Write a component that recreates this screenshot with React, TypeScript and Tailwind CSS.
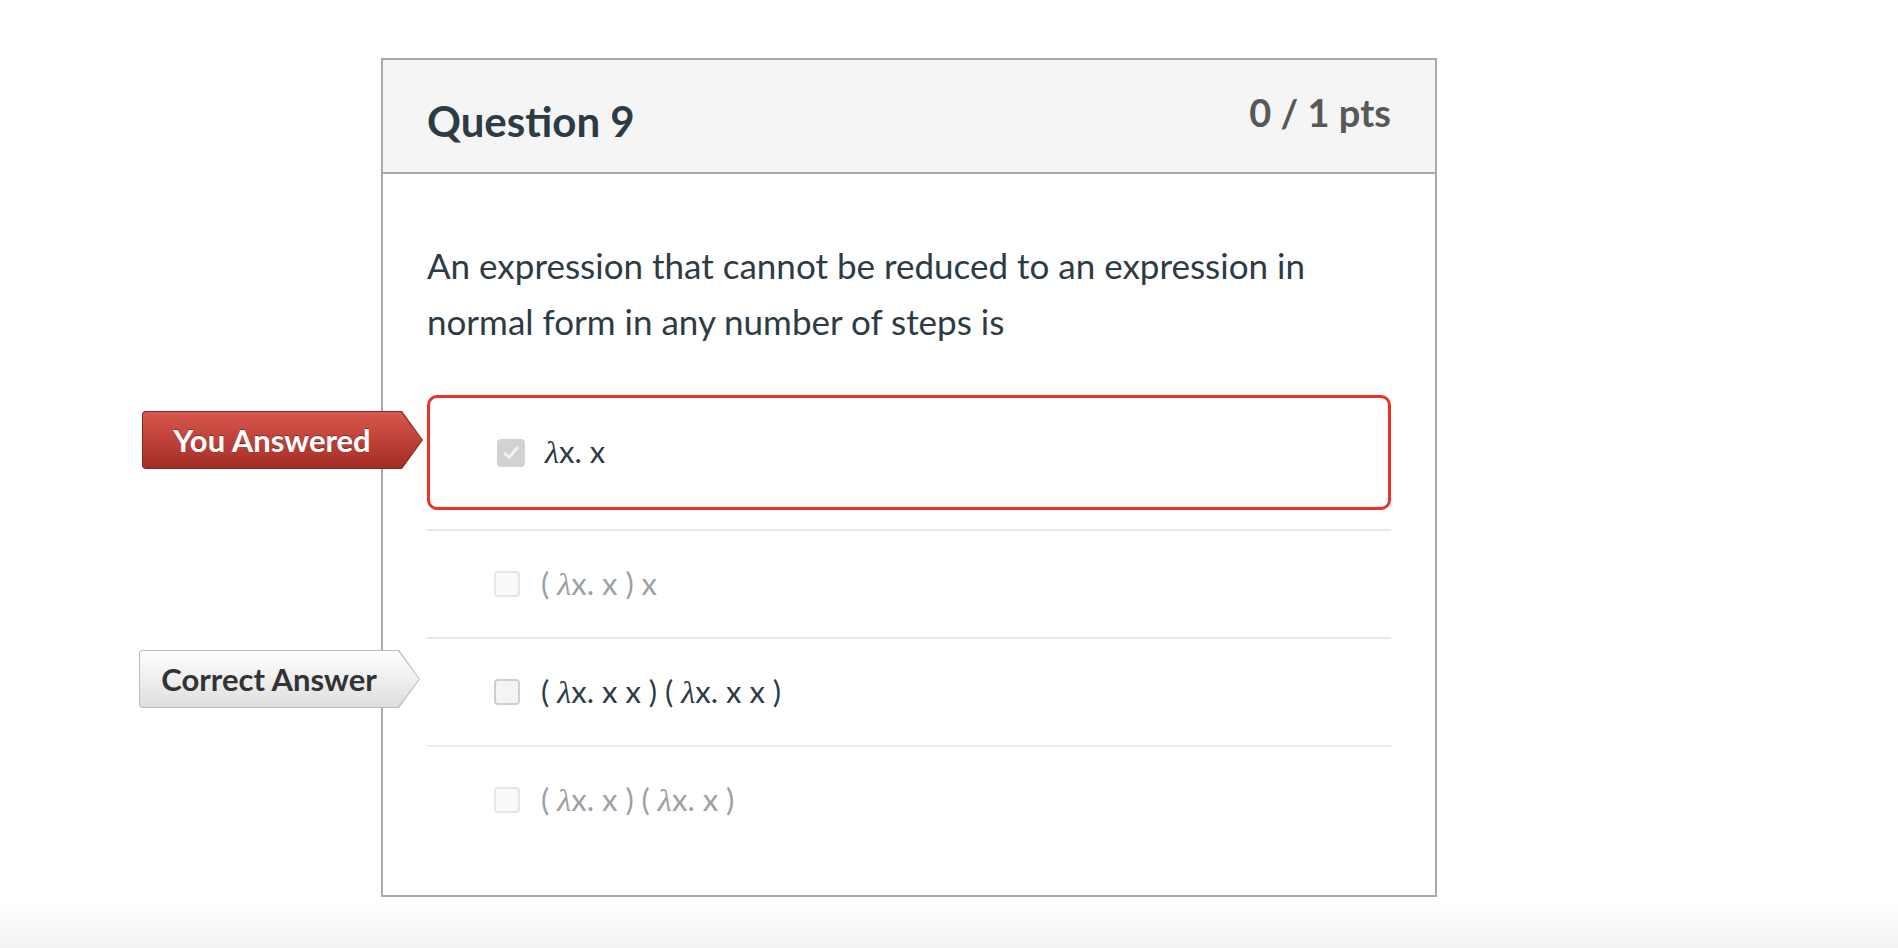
import React from "react";

const Lam = () => (
  <span className="italic font-['Liberation_Serif',serif] text-[1.05em]">λ</span>
);

function Label({ kind }: { kind: "you" | "correct" }) {
  const you = kind === "you";
  const shape =
    "[clip-path:polygon(0_0,calc(100%-21px)_0,100%_50%,calc(100%-21px)_100%,0_100%)]";
  return (
    <div
      className={`absolute h-[58px] right-[calc(100%+7px)] rounded-l-[4px] p-px ${shape} ${
        you ? "w-[281px] bg-[#8f251f] top-[13px]" : "w-[281px] bg-[#bcbcbc] top-[11px]"
      }`}
    >
      <div
        className={`h-full w-full rounded-l-[3px] flex items-center justify-center pr-[21px] ${shape} ${
          you
            ? "bg-gradient-to-b from-[#d9574e] to-[#a42c25]"
            : "bg-gradient-to-b from-[#ffffff] to-[#dedede]"
        }`}
      >
        <span
          className={`font-['Lato',sans-serif] font-bold text-[31px] leading-none ${
            you ? "text-white [text-shadow:0_-1px_0_rgba(0,0,0,0.35)]" : "text-[#333333]"
          }`}
        >
          {you ? "You Answered" : "Correct Answer"}
        </span>
      </div>
    </div>
  );
}

function Box({ checked, tone }: { checked?: boolean; tone: "dark" | "light" }) {
  if (checked) {
    return (
      <div className="w-[28px] h-[28px] rounded-[4px] bg-[#d2d2d2] flex items-center justify-center shrink-0">
        <svg width="20" height="20" viewBox="0 0 20 20">
          <path d="M4 10.5 L8.2 14.5 L16 5" fill="none" stroke="#f2f2f2" strokeWidth="3" strokeLinecap="round" strokeLinejoin="round" />
        </svg>
      </div>
    );
  }
  return (
    <div
      className={`w-[26px] h-[26px] rounded-[4px] shrink-0 border-2 ${
        tone === "dark" ? "border-[#cfcfcf] bg-[#f4f4f4]" : "border-[#e6e6e6] bg-[#fafafa]"
      }`}
    />
  );
}

export default function App() {
  const dark = "text-[#2d3b45]";
  const gray = "text-[#9ba1a6]";
  return (
    <div className="w-full h-[948px] bg-white flex flex-col font-['Lato',sans-serif]">
      <div className="flex-1 pt-[58px]">
        <div className="ml-[381px] w-[1056px] h-[839px] border-2 border-[#a9a9a9] flex flex-col">
          <div className="h-[114px] bg-[#f5f5f5] border-b-2 border-[#a9a9a9] px-[44px] flex justify-between shrink-0">
            <div className={`pt-[36px] text-[42px] leading-[50px] font-bold ${dark}`}>Question 9</div>
            <div className="pt-[30px] text-[38px] leading-[45px] font-bold text-[#585858]">0 / 1 pts</div>
          </div>
          <div className="px-[44px] pt-[63px]">
            <p className={`text-[35px] leading-[56px] ${dark} max-w-[920px]`}>
              An expression that cannot be reduced to an expression in normal form in any number of steps is
            </p>
            <div className="mt-[46px] flex flex-col">
              <div className="relative h-[115px] border-[3px] border-[#ee3326] rounded-[10px] flex items-center pl-[67px] gap-[20px]">
                <Label kind="you" />
                <Box checked tone="dark" />
                <span className={`text-[31px] ${dark}`}>
                  <Lam />x. x
                </span>
              </div>
              <div className="h-[19px]" />
              <div className="border-t-2 border-[#e8e8e8]" />
              <div className="h-[106px] flex items-center pl-[67px] gap-[21px]">
                <Box tone="light" />
                <span className={`text-[31px] ${gray}`}>
                  ( <Lam />x. x ) x
                </span>
              </div>
              <div className="border-t-2 border-[#e8e8e8]" />
              <div className="relative h-[106px] flex items-center pl-[67px] gap-[21px]">
                <Label kind="correct" />
                <Box tone="dark" />
                <span className={`text-[31px] ${dark}`}>
                  ( <Lam />x. x x ) ( <Lam />x. x x )
                </span>
              </div>
              <div className="border-t-2 border-[#ececec]" />
              <div className="h-[106px] flex items-center pl-[67px] gap-[21px]">
                <Box tone="light" />
                <span className={`text-[31px] ${gray}`}>
                  ( <Lam />x. x ) ( <Lam />x. x )
                </span>
              </div>
            </div>
          </div>
        </div>
      </div>
      <div className="h-[44px] bg-gradient-to-b from-white to-[#f3f3f3] shrink-0" />
    </div>
  );
}
